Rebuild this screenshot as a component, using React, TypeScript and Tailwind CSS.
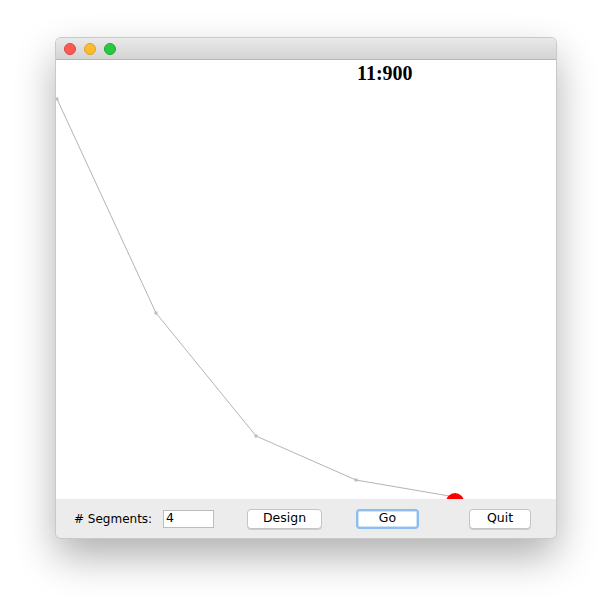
const points = [
  [1, 39],
  [100, 253],
  [200, 376],
  [300, 420],
  [399, 437],
];

function TrafficLights() {
  return (
    <div className="flex items-center gap-2 pl-[8px]">
      <div className="w-3 h-3 rounded-full bg-[#fc5a55] border border-[#e0443e]" />
      <div className="w-3 h-3 rounded-full bg-[#fdbc2e] border border-[#dea123]" />
      <div className="w-3 h-3 rounded-full bg-[#28c840] border border-[#1aab29]" />
    </div>
  );
}

function Canvas() {
  const path = points.map((p) => p.join(",")).join(" ");
  return (
    <div className="relative flex-1 bg-white overflow-hidden">
      <svg width="500" height="439" className="block">
        <polyline points={path} fill="none" stroke="#b4b4b4" strokeWidth="1" />
        {points.map((p, i) => (
          <rect key={i} x={p[0] - 1.5} y={p[1] - 1.5} width="3" height="3" fill="#bdbdbd" />
        ))}
        <circle cx="399" cy="442" r="9" fill="#ff0000" />
        <text
          x="301"
          y="20"
          fontFamily="'Liberation Serif', 'Times New Roman', serif"
          fontWeight="bold"
          fontSize="20"
          fill="#000"
        >
          11:900
        </text>
      </svg>
    </div>
  );
}

function Button({ label, focused, width }: { label: string; focused?: boolean; width: string }) {
  return (
    <div
      className={
        focused
          ? `${width} h-[20px] flex items-center justify-center rounded-[4px] bg-white border-2 border-[#8dbcf0] shadow-[inset_0_0_0_1px_#cfe3fa] text-black`
          : `${width} h-[20px] flex items-center justify-center rounded-[4px] bg-white border border-[#c4c4c4] shadow-[0_1px_0_rgba(0,0,0,0.12)] text-black`
      }
    >
      {label}
    </div>
  );
}

export default function App() {
  return (
    <div className="w-[612px] h-[612px] bg-white pt-[38px] pl-[56px]">
      <div className="w-[500px] h-[500px] flex flex-col rounded-[5px] overflow-hidden shadow-[0_0_0_1px_#c9c9c9,0_18px_40px_rgba(0,0,0,0.32)]">
        <div className="h-[22px] flex items-center bg-gradient-to-b from-[#e9e9e9] to-[#d4d4d4] border-b border-[#b6b6b6]">
          <TrafficLights />
        </div>
        <Canvas />
        <div className="h-[39px] bg-[#ececec] flex items-center text-[12.5px] text-black font-['DejaVu_Sans',sans-serif]">
          <div className="ml-[18px] w-[77px] text-[12px]">#&nbsp;Segments:</div>
          <div className="ml-[12px] w-[51px] h-[18px] bg-white border border-[#bcbcbc] flex items-center pl-[2px]">4</div>
          <div className="ml-[33px]">
            <Button label="Design" width="w-[75px]" />
          </div>
          <div className="ml-[34px]">
            <Button label="Go" focused width="w-[63px]" />
          </div>
          <div className="ml-[50px]">
            <Button label="Quit" width="w-[62px]" />
          </div>
        </div>
      </div>
    </div>
  );
}
